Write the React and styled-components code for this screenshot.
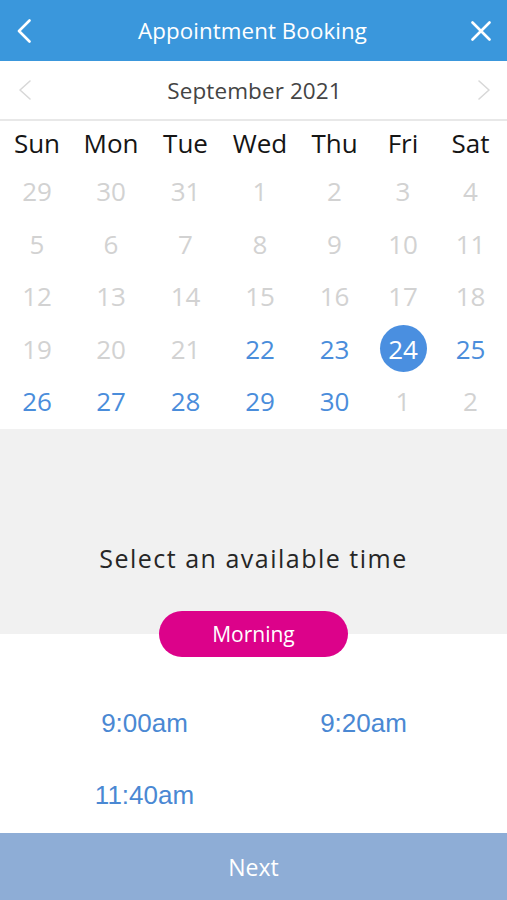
import React from "react";
import styled, { createGlobalStyle } from "styled-components";

const Global = createGlobalStyle`
  html, body { margin: 0; padding: 0; background: #fff; }
  body { font-family: "Open Sans", "Noto Sans", sans-serif; }
  * { box-sizing: border-box; }
`;

const Page = styled.div`
  width: 507px;
  height: 900px;
  display: flex;
  flex-direction: column;
  overflow: hidden;
  background: #fff;
`;

const Header = styled.header`
  height: 61px;
  background: #3a97dc;
  display: flex;
  align-items: center;
  justify-content: space-between;
  padding: 0 14px 0 12px;
  color: #fff;
`;

const Title = styled.h1`
  margin: 0;
  font-size: 22.3px;
  font-weight: 400;
  color: #fff;
  letter-spacing: 0.1px;
`;

const IconBtn = styled.button`
  width: 24px;
  height: 24px;
  padding: 0;
  border: none;
  background: none;
  display: flex;
  align-items: center;
  justify-content: center;
`;

const MonthBar = styled.div`
  height: 60px;
  border-bottom: 2px solid #e8e8e8;
  display: flex;
  align-items: center;
  justify-content: space-between;
  padding: 0 16px 0 18px;
`;

const MonthLabel = styled.div`
  font-size: 22.5px;
  color: #444;
  letter-spacing: 0.1px;
`;

const Grid = styled.div`
  display: grid;
  grid-template-columns: 74px 74px 75px 74px 75px 62px 73px;
  grid-template-rows: 44px repeat(5, 52.5px);
  height: 308px;
  padding-bottom: 1.5px;
`;

const DayName = styled.div`
  display: flex;
  align-items: center;
  justify-content: center;
  font-size: 26px;
  color: #151515;
`;

const DateCell = styled.div`
  display: flex;
  align-items: center;
  justify-content: center;
  font-size: 26px;
  color: ${(p) => (p.$active ? "#4a8ddb" : "#d2d2d2")};
`;

const Selected = styled.span`
  width: 47px;
  height: 47px;
  border-radius: 50%;
  background: #4a8fe0;
  color: #fff;
  display: flex;
  align-items: center;
  justify-content: center;
`;

const Prompt = styled.div`
  height: 176px;
  background: #f1f1f1;
  display: flex;
  align-items: flex-end;
  justify-content: center;
  padding-bottom: 30px;
  font-size: 25px;
  letter-spacing: 1.5px;
  color: #262626;
`;

const PillRow = styled.div`
  height: 58px;
  background: linear-gradient(to bottom, #f1f1f1 50%, #fff 50%);
  display: flex;
  align-items: center;
  justify-content: center;
`;

const Pill = styled.button`
  width: 189px;
  height: 46px;
  border: none;
  border-radius: 23px;
  background: #dc028a;
  color: #fff;
  font-family: "Open Sans", sans-serif;
  font-size: 21px;
  padding: 0;
`;

const Times = styled.div`
  display: grid;
  grid-template-columns: 219px 219px;
  grid-auto-rows: 72px;
  padding: 24px 34px 0 35px;
  flex: 1;
`;

const Slot = styled.div`
  display: flex;
  align-items: center;
  justify-content: center;
  font-family: "Liberation Sans", Arial, sans-serif;
  font-size: 26px;
  color: #4a88d3;
`;

const NextBar = styled.button`
  height: 67px;
  border: none;
  background: #8eadd6;
  color: #fff;
  font-family: "Open Sans", sans-serif;
  font-size: 23px;
  width: 100%;
`;

const days = ["Sun", "Mon", "Tue", "Wed", "Thu", "Fri", "Sat"];
const weeks = [
  [29, 30, 31, 1, 2, 3, 4],
  [5, 6, 7, 8, 9, 10, 11],
  [12, 13, 14, 15, 16, 17, 18],
  [19, 20, 21, 22, 23, 24, 25],
  [26, 27, 28, 29, 30, 1, 2],
];

export default function App() {
  return (
    <Page>
      <Global />
      <Header>
        <IconBtn aria-label="Back">
          <svg width="14" height="24" viewBox="0 0 14 24">
            <polyline points="12.5,1.5 2,12 12.5,22.5" fill="none" stroke="#fff" strokeWidth="2.6" strokeLinecap="round" strokeLinejoin="round" />
          </svg>
        </IconBtn>
        <Title>Appointment Booking</Title>
        <IconBtn aria-label="Close">
          <svg width="20" height="20" viewBox="0 0 20 20">
            <path d="M1.5 1.5 L18.5 18.5 M18.5 1.5 L1.5 18.5" stroke="#fff" strokeWidth="2.6" strokeLinecap="round" />
          </svg>
        </IconBtn>
      </Header>
      <MonthBar>
        <svg width="14" height="22" viewBox="0 0 14 22">
          <polyline points="12,2 2,11 12,20" fill="none" stroke="#d8d8d8" strokeWidth="1.6" strokeLinecap="round" strokeLinejoin="round" />
        </svg>
        <MonthLabel>September 2021</MonthLabel>
        <svg width="14" height="22" viewBox="0 0 14 22">
          <polyline points="2,2 12,11 2,20" fill="none" stroke="#d8d8d8" strokeWidth="1.6" strokeLinecap="round" strokeLinejoin="round" />
        </svg>
      </MonthBar>
      <Grid>
        {days.map((d) => (
          <DayName key={d}>{d}</DayName>
        ))}
        {weeks.map((w, wi) =>
          w.map((n, di) => {
            const active = (wi === 3 && di >= 3) || (wi === 4 && di <= 4);
            const sel = wi === 3 && n === 24;
            return (
              <DateCell key={`${wi}-${di}`} $active={active}>
                {sel ? <Selected>{n}</Selected> : n}
              </DateCell>
            );
          })
        )}
      </Grid>
      <Prompt>Select an available time</Prompt>
      <PillRow>
        <Pill>Morning</Pill>
      </PillRow>
      <Times>
        <Slot>9:00am</Slot>
        <Slot>9:20am</Slot>
        <Slot>11:40am</Slot>
      </Times>
      <NextBar>Next</NextBar>
    </Page>
  );
}
